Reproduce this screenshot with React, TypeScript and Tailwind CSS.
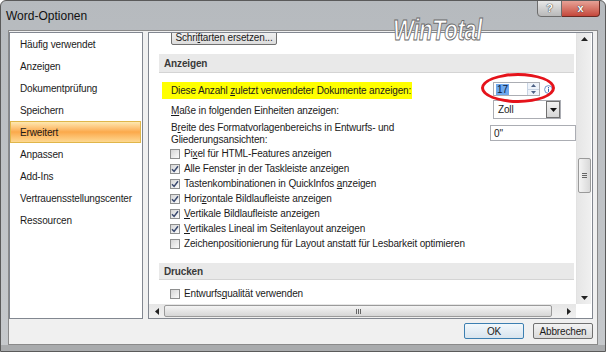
import React from "react";

const F = "font-['Liberation_Sans',Arial,sans-serif]";

function Check({ checked }: { checked: boolean }) {
  return (
    <div className="w-[10px] h-[10px] border border-[#8e8f8f] bg-gradient-to-br from-[#d6d6d6] to-[#fbfbfb] flex items-center justify-center shrink-0">
      {checked && (
        <svg width="8" height="8" viewBox="0 0 8 8">
          <path d="M1 4.2 L3.1 6.4 L7 1.2" stroke="#3a4a70" strokeWidth="1.5" fill="none" />
        </svg>
      )}
    </div>
  );
}

function CRow({ checked, children }: { checked: boolean; children: React.ReactNode }) {
  return (
    <div className="h-[15px] flex items-center pl-[21px]">
      <Check checked={checked} />
      <span className="ml-[4px] whitespace-nowrap">{children}</span>
    </div>
  );
}

function Band({ label, h }: { label: string; h: string }) {
  return (
    <div className={`${h} ml-[10px] mr-[2px] bg-[#e9e9e9] border-b border-[#d4d4d4] flex items-center pl-[5px] font-bold text-[#3a3a3a]`}>
      {label}
    </div>
  );
}

export default function App() {
  return (
    <div
      className={`${F} w-[606px] h-[352px] relative overflow-hidden rounded-t-[6px] border border-[#5a5a5a] bg-gradient-to-b from-[#b6babe] to-[#c6c9cc] flex flex-col text-[10px] tracking-[-0.15px] text-[#1b1b1b]`}
    >
      {/* title bar */}
      <div className="h-[29px] flex items-start justify-between">
        <div className="pl-[5px] pt-[6px] text-[12px] tracking-normal text-[#111]">Word-Optionen</div>
        <div className="flex -mt-[1px] mr-[5px]">
          <div className="w-[25px] h-[17px] border border-[#6d6d6d] rounded-bl-[4px] bg-gradient-to-b from-[#e8e8e8] to-[#b9b9b9] flex items-center justify-center text-[11px] font-bold text-white [text-shadow:0_0_1px_#333,0_0_1px_#333]">
            ?
          </div>
          <div className="w-[38px] h-[17px] border border-[#6a2a22] border-l-0 rounded-br-[4px] bg-gradient-to-b from-[#e6a196] to-[#c4473b] flex items-center justify-center text-[11px] font-bold text-white [text-shadow:0_0_1px_#333,0_0_1px_#333]">
            x
          </div>
        </div>
      </div>

      {/* client area */}
      <div className="flex-1 mx-[7px] border border-[#8a8a8a] bg-[#f0f0f0] flex flex-col">
        <div className="flex pt-[1px] pl-[0px] pr-[3px] gap-[5px]">
          {/* nav */}
          <div className="w-[134px] h-[287px] border border-[#828790] bg-white flex flex-col">
            {[
              "Häufig verwendet",
              "Anzeigen",
              "Dokumentprüfung",
              "Speichern",
              "Erweitert",
              "Anpassen",
              "Add-Ins",
              "Vertrauensstellungscenter",
              "Ressourcen",
            ].map((t) =>
              t === "Erweitert" ? (
                <div
                  key={t}
                  className="h-[22px] mr-[1px] flex items-center pl-[9px] border border-[#e0b64a] bg-gradient-to-b from-[#fde8b0] via-[#fba94a] to-[#fdd890]"
                >
                  {t}
                </div>
              ) : (
                <div key={t} className="h-[22px] flex items-center pl-[10px]">
                  {t}
                </div>
              )
            )}
          </div>

          {/* content panel */}
          <div className="w-[445px] h-[287px] border border-[#828790] bg-white flex flex-col">
            <div className="flex h-[271px]">
              <div className="w-[427px] overflow-hidden flex flex-col relative">
                <div className="-mt-[3px] ml-[22px] w-[106px] h-[15px] border border-[#707070] rounded-[2px] bg-gradient-to-b from-[#f3f3f3] to-[#dcdcdc] flex items-center justify-center shrink-0">
                  <span>
                    Schri<span className="underline">f</span>tarten ersetzen...
                  </span>
                </div>
                <div className="mt-[9px] shrink-0">
                  <Band label="Anzeigen" h="h-[19px]" />
                </div>
                {/* yellow row */}
                <div className="mt-[9px] h-[17px] flex items-start shrink-0 relative">
                  <div className="ml-[13px] w-[250px] h-[17px] bg-[#ffff00] flex items-center pl-[9px] whitespace-nowrap">
                    <span>
                      Diese Anzahl <span className="underline">z</span>uletzt verwendeter Dokumente anzeigen:
                    </span>
                  </div>
                  <div className="ml-[81px] w-[47px] h-[14px] border border-[#abadb3] bg-white flex items-center">
                    <span className="ml-[2px] px-[1px] bg-[#6ea8ee] text-[#0c1a3c] leading-[11px]">17</span>
                    <div className="ml-auto w-[12px] h-[12px] flex flex-col border-l border-[#c8d4e4]">
                      <div className="flex-1 flex items-center justify-center bg-[#eef3fa] border-b border-[#c8d4e4]">
                        <svg width="5" height="3" viewBox="0 0 5 3"><path d="M0 3 L2.5 0 L5 3Z" fill="#4d6185" /></svg>
                      </div>
                      <div className="flex-1 flex items-center justify-center bg-[#eef3fa]">
                        <svg width="5" height="3" viewBox="0 0 5 3"><path d="M0 0 L2.5 3 L5 0Z" fill="#4d6185" /></svg>
                      </div>
                    </div>
                  </div>
                  <svg className="ml-[4px] mt-[3px]" width="9" height="9" viewBox="0 0 9 9">
                    <circle cx="4.5" cy="4.5" r="3.9" fill="white" stroke="#5a86c4" strokeWidth="0.9" />
                    <rect x="4" y="2" width="1" height="1" fill="#3a66b0" />
                    <rect x="4" y="3.6" width="1" height="3.3" fill="#3a66b0" />
                  </svg>
                  <div className="absolute left-[332px] -top-[9px] w-[74px] h-[30px] rounded-[50%] border-[3px] border-[#e5131b]" />
                </div>
                {/* Maße row */}
                <div className="mt-[1px] h-[19px] flex items-start shrink-0">
                  <div className="ml-[22px] mt-[3px] whitespace-nowrap">
                    <span className="underline">M</span>aße in folgenden Einheiten anzeigen:
                  </div>
                  <div className="ml-auto mr-[15px] w-[68px] h-[19px] border border-[#abadb3] bg-white flex items-center">
                    <span className="ml-[4px]">Zoll</span>
                    <div className="ml-auto mr-[0px] w-[14px] h-[17px] border border-[#707070] bg-gradient-to-b from-[#f2f2f2] to-[#d6d6d6] flex items-center justify-center">
                      <svg width="7" height="4" viewBox="0 0 7 4"><path d="M0 0 L3.5 4 L7 0Z" fill="#111" /></svg>
                    </div>
                  </div>
                </div>
                {/* Breite row */}
                <div className="mt-[1px] h-[26px] flex items-start shrink-0">
                  <div className="ml-[22px] pt-[2px] leading-[12px]">
                    B<span className="underline">r</span>eite des Formatvorlagenbereichs in Entwurfs- und
                    <br />
                    Gliederungsansichten:
                  </div>
                  <div className="ml-auto mt-[5px] w-[86px] h-[16px] border border-[#abadb3] bg-white flex items-center pl-[3px]">
                    0"
                  </div>
                </div>
                {/* checkbox rows */}
                <CRow checked={false}>
                  Pi<span className="underline">x</span>el für HTML-Features anzeigen
                </CRow>
                <CRow checked>
                  Alle Fenster <span className="underline">i</span>n der Taskleiste anzeigen
                </CRow>
                <CRow checked>
                  Tastenkombinationen in QuickInfos <span className="underline">a</span>nzeigen
                </CRow>
                <CRow checked>
                  Hori<span className="underline">z</span>ontale Bildlaufleiste anzeigen
                </CRow>
                <CRow checked>
                  <span className="underline">V</span>ertikale Bildlaufleiste anzeigen
                </CRow>
                <CRow checked>
                  <span className="underline">V</span>ertikales Lineal im Seitenlayout anzeigen
                </CRow>
                <CRow checked={false}>Zeichenpositionierung für Layout anstatt für Lesbarkeit optimieren</CRow>
                <div className="mt-[12px] shrink-0">
                  <Band label="Drucken" h="h-[17px]" />
                </div>
                <div className="mt-[6px] shrink-0">
                  <CRow checked={false}>
                    Entwurfs<span className="underline">q</span>ualität verwenden
                  </CRow>
                </div>
              </div>
              {/* vertical scrollbar */}
              <div className="w-[15px] h-[271px] bg-gradient-to-r from-[#e6e6e6] to-[#f0f0f0] border-l border-[#e2e2e2] flex flex-col items-center">
                <div className="h-[12px] flex items-center justify-center">
                  <svg width="7" height="4" viewBox="0 0 7 4"><path d="M0 4 L3.5 0 L7 4Z" fill="#222" /></svg>
                </div>
                <div className="mt-[113px] w-[13px] h-[35px] border border-[#9a9a9a] rounded-[2px] bg-gradient-to-r from-[#f4f4f4] to-[#d9d9d9] flex flex-col items-center justify-center gap-[1px]">
                  <div className="w-[5px] h-px bg-[#666]" />
                  <div className="w-[5px] h-px bg-[#666]" />
                  <div className="w-[5px] h-px bg-[#666]" />
                </div>
                <div className="mt-auto h-[12px] flex items-center justify-center">
                  <svg width="7" height="4" viewBox="0 0 7 4"><path d="M0 0 L3.5 4 L7 0Z" fill="#222" /></svg>
                </div>
              </div>
            </div>
            {/* horizontal scrollbar */}
            <div className="h-[14px] flex">
              <div className="w-[427px] flex bg-gradient-to-b from-[#e6e6e6] to-[#f0f0f0]">
                <div className="w-[15px] flex items-center justify-center">
                  <svg width="4" height="7" viewBox="0 0 4 7"><path d="M4 0 L0 3.5 L4 7Z" fill="#222" /></svg>
                </div>
                <div className="w-[388px] my-[1px] border border-[#9a9a9a] rounded-[2px] bg-gradient-to-b from-[#f4f4f4] to-[#d6d6d6] flex items-center justify-center gap-[1px]">
                  <div className="w-px h-[5px] bg-[#666]" />
                  <div className="w-px h-[5px] bg-[#666]" />
                  <div className="w-px h-[5px] bg-[#666]" />
                </div>
                <div className="flex-1" />
                <div className="w-[15px] flex items-center justify-center">
                  <svg width="4" height="7" viewBox="0 0 4 7"><path d="M0 0 L4 3.5 L0 7Z" fill="#222" /></svg>
                </div>
              </div>
              <div className="w-[15px] bg-white" />
            </div>
          </div>
        </div>

        {/* buttons */}
        <div className="mt-[4px] flex justify-end gap-[9px] pr-[4px]">
          <div className="w-[60px] h-[16px] border border-[#3c7fb1] rounded-[2px] bg-gradient-to-b from-[#f2f8fc] to-[#d8e4ee] flex items-center justify-center">
            OK
          </div>
          <div className="w-[60px] h-[16px] border border-[#707070] rounded-[2px] bg-gradient-to-b from-[#f3f3f3] to-[#dadada] flex items-center justify-center">
            Abbrechen
          </div>
        </div>
      </div>
      <div className="h-[6px] bg-[#a9abad]" />

      {/* WinTotal watermark */}
      <div className="absolute left-[392px] top-[8px] text-[29px] italic font-bold tracking-[-0.5px] scale-x-[0.76] origin-left text-white [-webkit-text-stroke:1px_#6a6a6a] pointer-events-none">
        WinTotal
      </div>
    </div>
  );
}
